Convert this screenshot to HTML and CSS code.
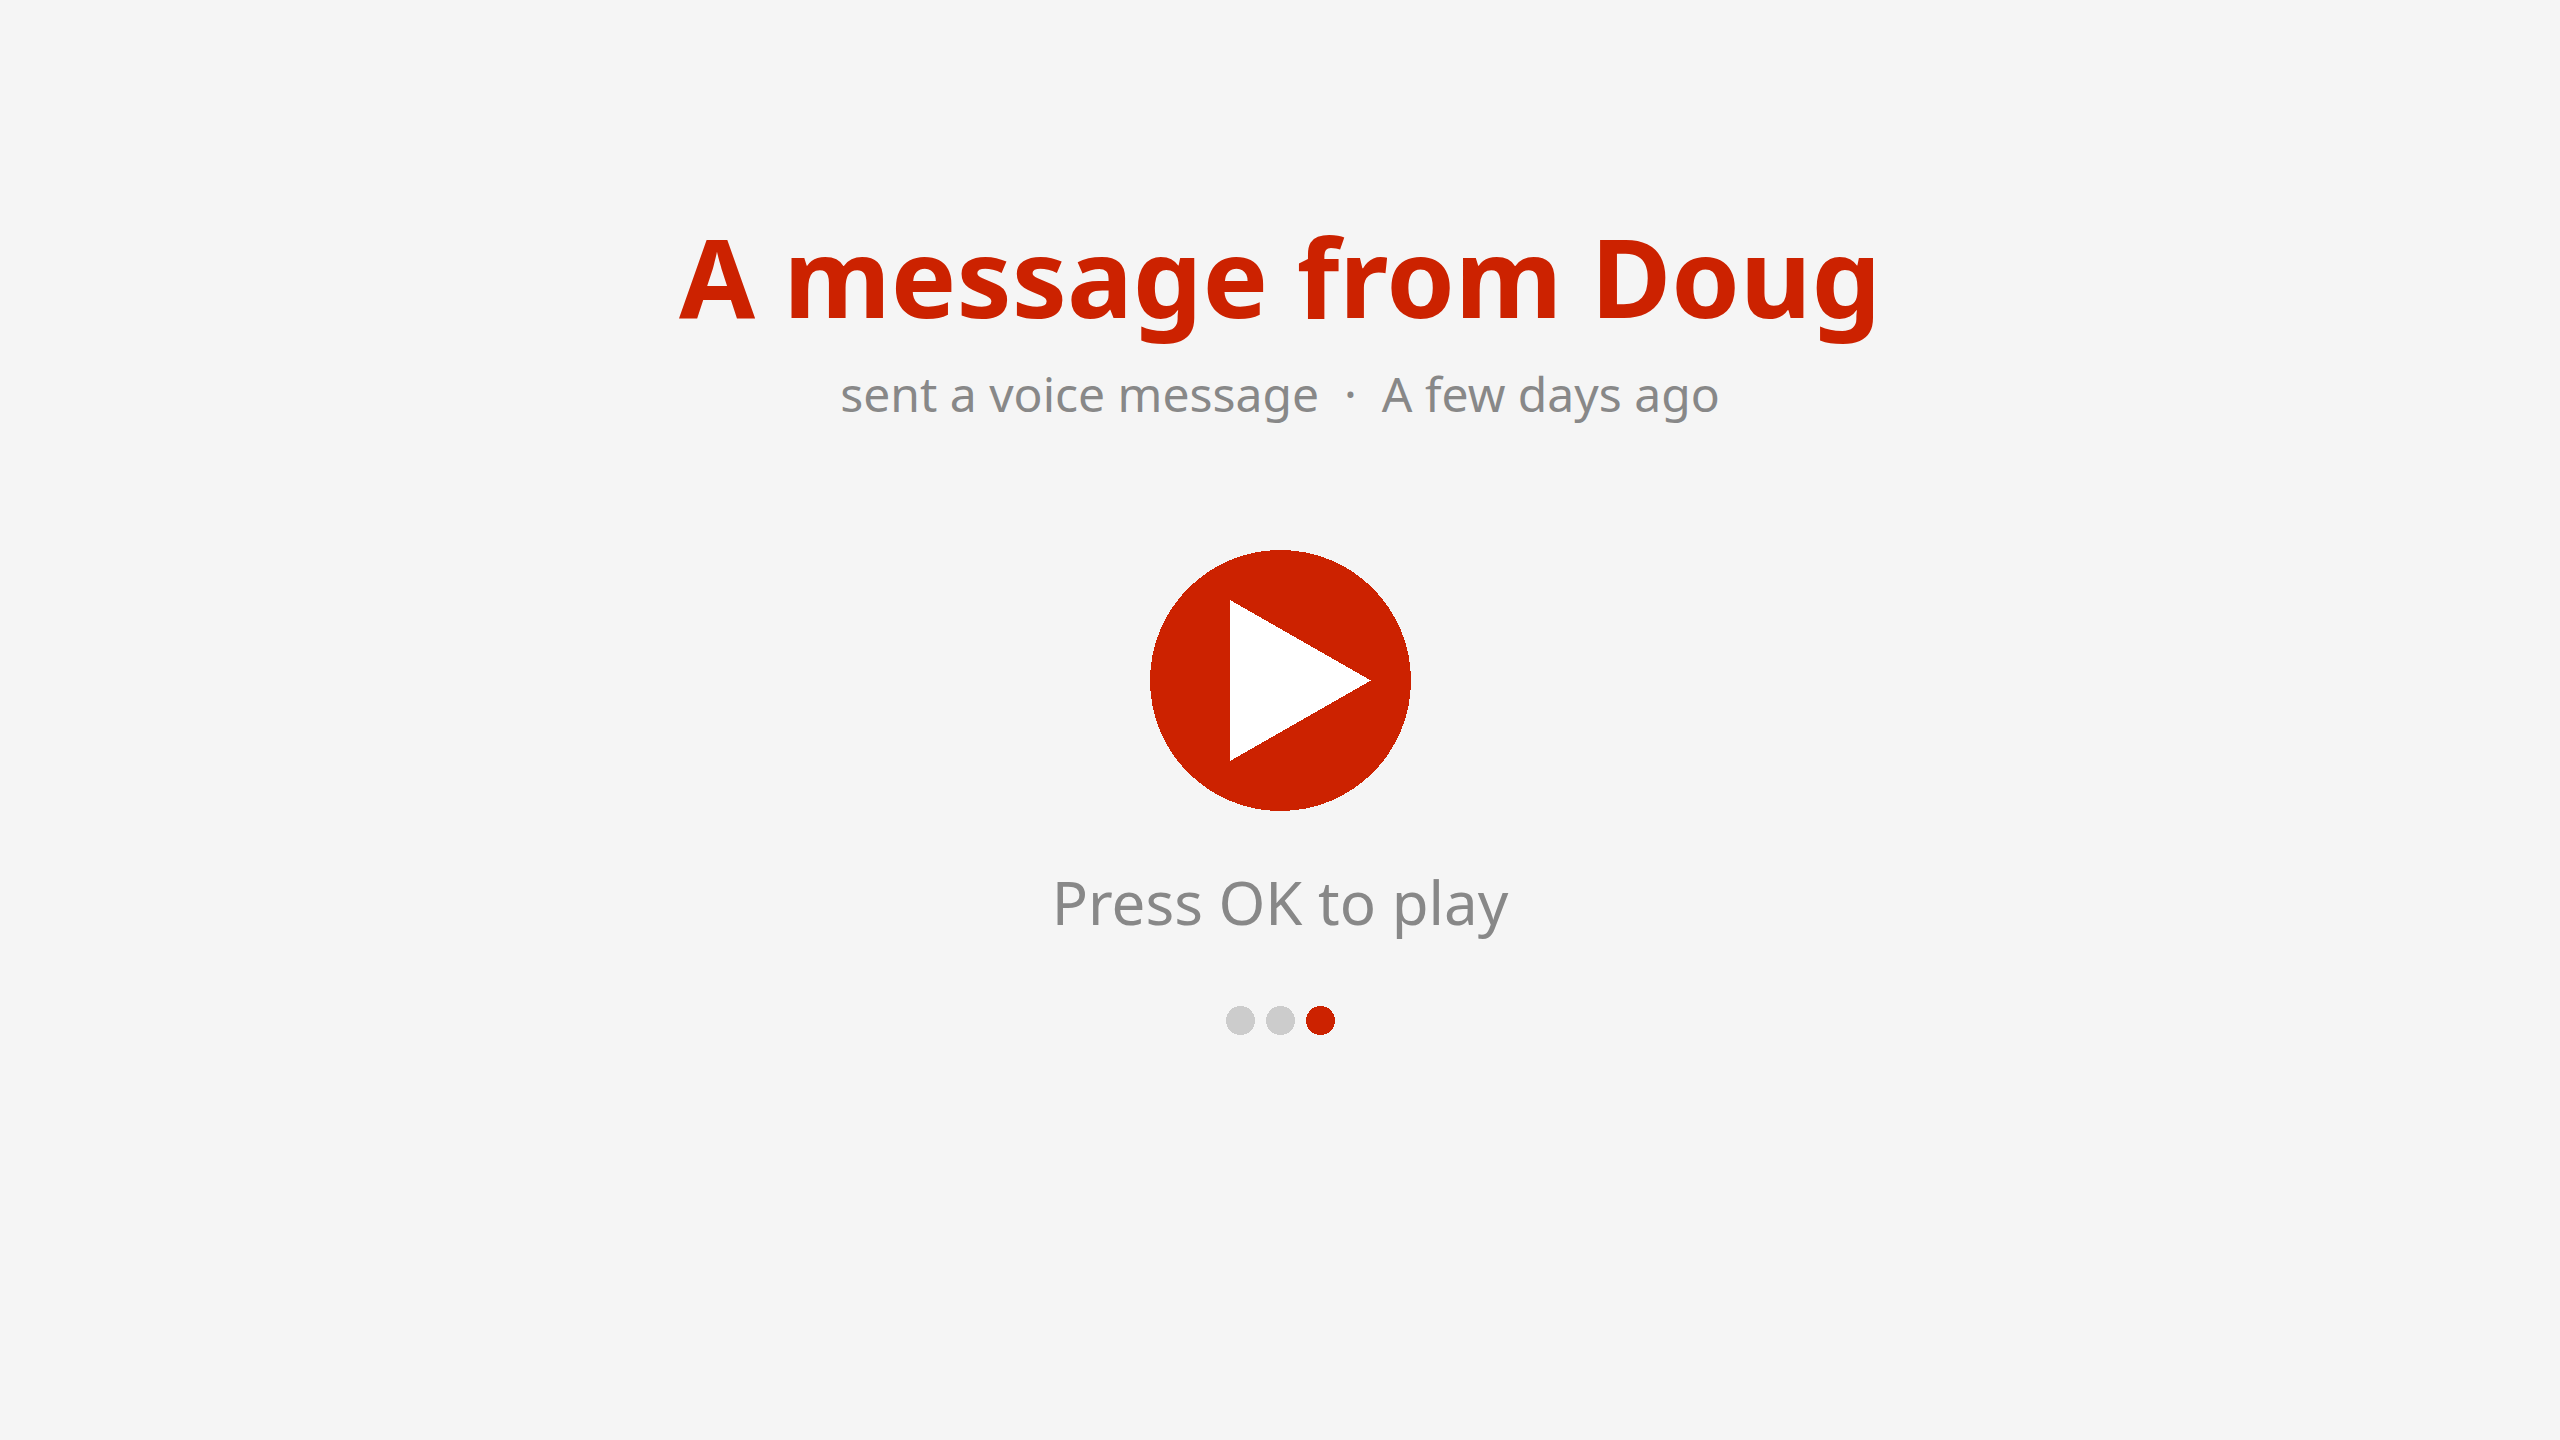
FILE: index.html
```html
<!DOCTYPE html>
<html lang="en">
<head>
<meta charset="utf-8">
<title>A message from Doug</title>
<link rel="stylesheet" href="styles.css">
</head>
<body>
<main class="message">
  <h1 class="title">A message from Doug</h1>
  <p class="meta">sent a voice message &nbsp;·&nbsp; A few days ago</p>
  <button class="play" type="button" aria-label="Play">
    <svg class="play-icon" viewBox="0 0 260 260" aria-hidden="true" shape-rendering="crispEdges">
      <circle class="play-disc" cx="130.5" cy="130.5" r="130.5"/>
      <path class="play-arrow" d="M80 50L221 130.5L80 211Z"/>
    </svg>
  </button>
  <p class="hint">Press OK to play</p>
  <svg class="dots" viewBox="0 0 110 30" role="img" aria-label="Message 3 of 3" shape-rendering="crispEdges">
    <circle class="dot" cx="15.5" cy="14.5" r="14.5"/>
    <circle class="dot" cx="55.5" cy="14.5" r="14.5"/>
    <circle class="dot dot-active" cx="95.5" cy="14.5" r="14.5"/>
  </svg>
</main>
</body>
</html>
```

FILE: styles.css
```css
body {
  margin: 0;
  background: #f5f5f5;
  color: #888;
  font-family: "Noto Sans", sans-serif;
}

.message {
  display: flex;
  flex-direction: column;
  align-items: center;
  padding: 200px 24px 0;
  text-align: center;
}

.title {
  margin: 0;
  color: #cc2200;
  font-size: 110px;
  font-weight: 700;
  line-height: 150px;
}

.meta {
  margin: 10px 0 0;
  font-size: 48px;
  line-height: 68px;
}

.play {
  width: 260px;
  height: 260px;
  margin: 122px 0 0;
  padding: 0;
  border: 0;
  border-radius: 50%;
  background: none;
  cursor: pointer;
}

.play-icon {
  display: block;
  width: 100%;
  height: 100%;
  overflow: visible;
}

.play-disc {
  fill: #cc2200;
}

.play-arrow {
  fill: #fff;
}

.hint {
  margin: 48px 0 0;
  font-size: 60px;
  line-height: 88px;
}

.dots {
  width: 110px;
  height: 30px;
  margin-top: 60px;
}

.dot {
  fill: #ccc;
}

.dot-active {
  fill: #cc2200;
}
```
